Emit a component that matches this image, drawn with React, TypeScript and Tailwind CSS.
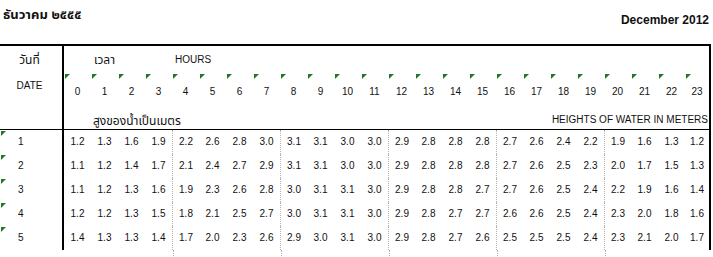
import React from "react";

const HOURS = Array.from({ length: 24 }, (_, i) => i);

const ROWS: { day: number; h: string[] }[] = [
  { day: 1, h: "1.2 1.3 1.6 1.9 2.2 2.6 2.8 3.0 3.1 3.1 3.0 3.0 2.9 2.8 2.8 2.8 2.7 2.6 2.4 2.2 1.9 1.6 1.3 1.2".split(" ") },
  { day: 2, h: "1.1 1.2 1.4 1.7 2.1 2.4 2.7 2.9 3.1 3.1 3.0 3.0 2.9 2.8 2.8 2.8 2.7 2.6 2.5 2.3 2.0 1.7 1.5 1.3".split(" ") },
  { day: 3, h: "1.1 1.2 1.3 1.6 1.9 2.3 2.6 2.8 3.0 3.1 3.1 3.0 2.9 2.8 2.8 2.7 2.7 2.6 2.5 2.4 2.2 1.9 1.6 1.4".split(" ") },
  { day: 4, h: "1.2 1.2 1.3 1.5 1.8 2.1 2.5 2.7 3.0 3.1 3.1 3.0 2.9 2.8 2.7 2.7 2.6 2.6 2.5 2.4 2.3 2.0 1.8 1.6".split(" ") },
  { day: 5, h: "1.4 1.3 1.3 1.4 1.7 2.0 2.3 2.6 2.9 3.0 3.1 3.0 2.9 2.8 2.7 2.6 2.5 2.5 2.5 2.4 2.3 2.1 2.0 1.7".split(" ") },
];

// little green corner flag, like a spreadsheet cell indicator
function Flag() {
  return (
    <span className="absolute left-[1px] top-[1px] h-0 w-0 border-t-[5px] border-r-[5px] border-t-[#237a23] border-r-transparent" />
  );
}

// columns 4, 8, 12, 16, 20 carry a dotted divider on the left
const dotted = (i: number) => (i > 0 && i % 4 === 0 ? "border-l border-dotted border-l-[#b4b4b4]" : "");

function HourCells({ values, flags }: { values: string[]; flags?: boolean }) {
  return (
    <div className="grid grid-cols-[repeat(23,27px)_24px]">
      {values.map((v, i) => (
        <div key={i} className={`relative h-full text-center ${flags ? "" : dotted(i)}`}>
          {flags && <Flag />}
          {v}
        </div>
      ))}
    </div>
  );
}

export default function App() {
  return (
    <div
      className="h-[257px] w-[713px] overflow-hidden bg-white text-[10px] text-[#111]"
      style={{ fontFamily: '"Liberation Sans", Tahoma, "Noto Sans Thai", "Noto Sans", sans-serif' }}
    >
      <div className="flex h-[44px] items-start justify-between pr-[4px]">
        <p className="pl-[3px] pt-[8px] text-[13px] font-bold leading-[14px]">ธันวาคม ๒๕๕๕</p>
        <p className="pt-[13px] text-[12px] font-bold leading-[14px]">December 2012</p>
      </div>

      <div className="w-[711px] border-t-2 border-r-2 border-black">
        {/* header */}
        <div className="flex h-[84px] border-b border-black">
          <div className="flex w-[65px] flex-col items-center border-r-2 border-black pr-[3px] leading-[12px]">
            <span className="pt-[8px] text-[12px]">วันที่</span>
            <span className="pt-[14px]">DATE</span>
          </div>
          <div className="flex flex-1 flex-col leading-[12px]">
            <div className="flex h-[27px] pt-[8px]">
              <span className="w-[111px] pl-[30px] text-[12px]">เวลา</span>
              <span>HOURS</span>
            </div>
            <div className="h-[30px] [&>div>div]:pt-[13px]">
              <HourCells values={HOURS.map(String)} flags />
            </div>
            <div className="flex flex-1 items-end justify-between pb-[2px] pl-[29px] pr-[1px]">
              <span className="text-[12px]">สูงของน้ำเป็นเมตร</span>
              <span className="pb-[1px]">HEIGHTS OF WATER IN METERS</span>
            </div>
          </div>
        </div>

        {/* data rows */}
        {ROWS.map((r) => (
          <div key={r.day} className="flex h-[24px] leading-[24px]">
            <div className="relative w-[65px] border-r-2 border-black pl-[18px]">
              <Flag />
              {r.day}
            </div>
            <div className="flex-1 [&>div]:h-full">
              <HourCells values={r.h} />
            </div>
          </div>
        ))}
      </div>

      <div className="flex h-[8px] w-[711px]">
        <div className="w-[65px]" />
        <div className="flex-1 [&>div]:h-full">
          <HourCells values={HOURS.map(() => "")} />
        </div>
      </div>
    </div>
  );
}
